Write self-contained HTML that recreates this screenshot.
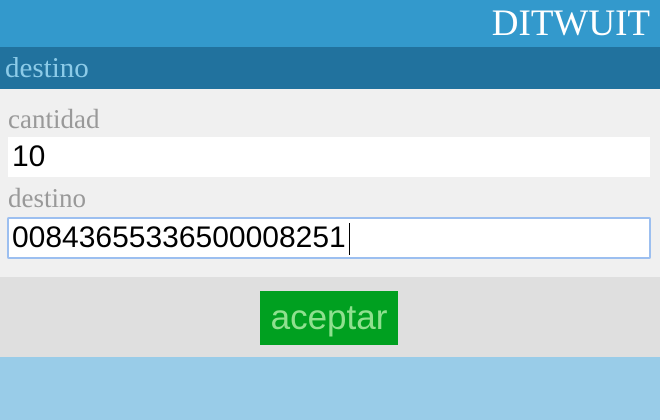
<!DOCTYPE html>
<html><head><style>
body{margin:0;width:660px;height:420px;background:#99cce8;overflow:hidden;position:relative;font-family:"Liberation Serif",serif}
div{position:absolute;box-sizing:border-box}
</style></head><body>
<div style="left:0;top:0;width:660px;height:47px;background:#3399cc"></div>
<div style="right:10px;top:2px;font-size:37px;color:#fff;line-height:44px">DITWUIT</div>
<div style="left:0;top:47px;width:660px;height:42px;background:#21729e"></div>
<div style="left:5px;top:51px;font-size:29px;color:#8ccbe8;line-height:34px">destino</div>
<div style="left:0;top:89px;width:660px;height:188px;background:#f0f0f0"></div>
<div style="left:8px;top:104px;font-size:27px;color:#999;line-height:30px">cantidad</div>
<div style="left:8px;top:137px;width:642px;height:40px;background:#fff;font-family:'Liberation Sans',sans-serif;font-size:30px;line-height:40px;padding-left:4px;color:#000">10</div>
<div style="left:8px;top:183px;font-size:27px;color:#999;line-height:30px">destino</div>
<div style="left:7px;top:217px;width:644px;height:42px;background:#fff;border:2px solid #9cbff0;border-radius:2px;font-family:'Liberation Sans',sans-serif;font-size:30px;line-height:38px;padding-left:3px;color:#000;white-space:nowrap">00843655336500008251<span style="display:inline-block;width:1px;height:32px;background:#000;vertical-align:middle;margin-left:3px"></span></div>
<div style="left:0;top:277px;width:660px;height:80px;background:#dfdfdf"></div>
<div style="left:260px;top:291px;width:138px;height:54px;background:#00a020;color:#8fe08f;font-family:'Liberation Sans',sans-serif;font-size:35px;line-height:54px;text-align:center">aceptar</div>
</body></html>
